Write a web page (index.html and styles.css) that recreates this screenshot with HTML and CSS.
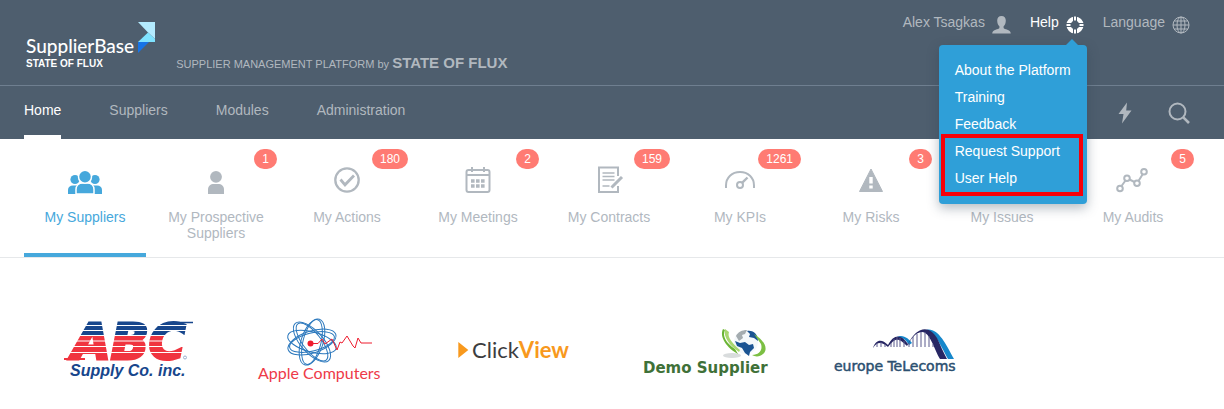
FILE: index.html
```html
<!DOCTYPE html>
<html lang="en">
<head>
  <meta charset="UTF-8" />
  <meta name="viewport" content="width=device-width, initial-scale=1.0" />
  <title>SupplierBase</title>
  <link rel="stylesheet" href="styles.css">
</head>
<body>
  <header class="header">
    <div class="topbar">
      <a class="brand" href="#">
        <span class="brand-text">
          <span class="brand-name">SupplierBase</span>
          <span class="brand-sub">STATE OF FLUX</span>
        </span>
        <svg class="brand-mark" width="18" height="31" viewBox="0 0 18 31" aria-hidden="true">
          <path d="M0 0H17V17L10 10.500Z" fill="#b3ebff"/>
          <path d="M10 10.500L17 17V20H0Z" fill="#7fe3ff"/>
          <path d="M0 20H11L0 31Z" fill="#1673e6"/>
        </svg>
      </a>
      <p class="tagline">SUPPLIER MANAGEMENT PLATFORM <span>by</span> <strong>STATE OF FLUX</strong></p>

      <ul class="user-menu">
        <li>
          <a href="#">Alex Tsagkas
            <svg width="19" height="18" viewBox="0 0 19 18" aria-hidden="true"><path fill="currentColor" d="M9.500 0C6.700 0 5.200 1.800 5.200 4.500C5.200 7 6 9.200 7.400 10.300V12C6.800 13.600 0.500 13.300 0.200 17.500H18.800C18.500 13.300 12.200 13.600 11.600 12V10.300C13 9.200 13.800 7 13.800 4.500C13.800 1.800 12.300 0 9.500 0Z"/></svg>
          </a>
        </li>
        <li class="open">
          <a href="#">Help
            <svg width="18" height="18" viewBox="0 0 18 18" aria-hidden="true">
              <circle cx="9" cy="9" r="6.500" fill="none" stroke="currentColor" stroke-width="4.200"/>
              <path d="M9 0V6M9 12V18M0 9H6M12 9H18" stroke="#4e5e6e" stroke-width="4"/>
              <path d="M9 0.500V4.500M9 13.500V17.500M0.500 9H4.500M13.500 9H17.500" stroke="currentColor" stroke-width="2"/>
            </svg>
          </a>
          <div class="dropdown">
            <a href="#">About the Platform</a>
            <a href="#">Training</a>
            <a href="#">Feedback</a>
            <div class="dropdown-marked">
              <a href="#">Request Support</a>
              <a href="#">User Help</a>
            </div>
          </div>
        </li>
        <li>
          <a href="#">Language
            <svg width="18" height="18" viewBox="0 0 18 18" fill="none" stroke="currentColor" aria-hidden="true">
              <circle cx="9" cy="9" r="8"/>
              <ellipse cx="9" cy="9" rx="4" ry="8"/>
              <path d="M9 1V17M1 9H17M2.200 5H15.800M2.200 13H15.800"/>
            </svg>
          </a>
        </li>
      </ul>
    </div>

    <nav class="nav">
      <a class="active" href="#">Home</a>
      <a href="#">Suppliers</a>
      <a href="#">Modules</a>
      <a href="#">Administration</a>
      <div class="nav-tools">
        <button type="button" aria-label="Quick actions">
          <svg width="22" height="22" viewBox="0 0 22 22" aria-hidden="true"><path fill="currentColor" d="M13 0.500L4.500 12H9.500L8 21.500L17.500 8.500H12.200Z"/></svg>
        </button>
        <button type="button" aria-label="Search">
          <svg width="22" height="22" viewBox="0 0 22 22" fill="none" stroke="currentColor" stroke-width="2" aria-hidden="true"><circle cx="9.500" cy="9.500" r="8"/><path d="M15.300 15.300L21 21" stroke-width="2.600"/></svg>
        </button>
      </div>
    </nav>
  </header>

  <main>
    <div class="tabs">
      <a class="tab active" href="#">
        <svg class="tab-icon" viewBox="0 0 36 32" fill="currentColor" aria-hidden="true">
          <circle cx="8" cy="15.500" r="4.600"/><circle cx="28" cy="15.500" r="4.600"/>
          <path d="M1 30V26C1 23 3 21.500 6 21.500H30C33 21.500 35 23 35 26V30Z"/>
          <path d="M9 30V25.500C9 21.500 12 19 16 19H20C24 19 27 21.500 27 25.500V30Z" stroke="#fff" stroke-width="1.500"/>
          <circle cx="18" cy="12.700" r="6.500" stroke="#fff" stroke-width="1.500"/>
          <path d="M0 30.200H36V32H0Z" fill="#fff"/>
        </svg>
        My Suppliers
      </a>
      <a class="tab" href="#">
        <svg class="tab-icon" viewBox="0 0 36 32" fill="currentColor" aria-hidden="true">
          <circle cx="18" cy="12.800" r="5.900"/>
          <path d="M10 30V25.500C10 22 12.500 20 16 20H20C23.500 20 26 22 26 25.500V30Z"/>
        </svg>
        My Prospective Suppliers
        <span class="badge">1</span>
      </a>
      <a class="tab" href="#">
        <svg class="tab-icon" viewBox="0 0 36 32" fill="none" stroke="currentColor" stroke-width="2.300" aria-hidden="true">
          <circle cx="18" cy="16" r="11.700"/>
          <path d="M11.500 15.500L16 20.800L25 11.500" stroke-width="2.800"/>
        </svg>
        My Actions
        <span class="badge">180</span>
      </a>
      <a class="tab" href="#">
        <svg class="tab-icon" viewBox="0 0 36 32" fill="none" stroke="currentColor" stroke-width="2" aria-hidden="true">
          <rect x="6.500" y="6" width="23" height="22" rx="2"/>
          <path d="M6.500 11H29.500M12 3V8M24 3V8"/>
          <path d="M11 17H25M11 22H25" stroke-width="3.600" stroke-dasharray="3.600 1.400"/>
        </svg>
        My Meetings
        <span class="badge">2</span>
      </a>
      <a class="tab" href="#">
        <svg class="tab-icon" viewBox="0 0 36 32" fill="none" stroke="currentColor" stroke-width="2" aria-hidden="true">
          <path d="M27 12V3.500H8V28H27V22"/>
          <path d="M11.500 9H23.500M11.500 12.500H23.500M11.500 16H23.500M11.500 22H18.500" stroke-width="1.700"/>
          <path d="M31 13L22.500 21.500L20.500 23.500" stroke-width="3"/>
        </svg>
        My Contracts
        <span class="badge">159</span>
      </a>
      <a class="tab" href="#">
        <svg class="tab-icon" viewBox="0 0 36 32" fill="none" stroke="currentColor" stroke-width="2" aria-hidden="true">
          <path d="M4 24V21.500C4 13.500 10 8 18 8S32 13.500 32 21.500V24"/>
          <circle cx="18" cy="21" r="3"/>
          <path d="M20.300 18.700L25.500 13.500" stroke-width="2.400"/>
        </svg>
        My KPIs
        <span class="badge">1261</span>
      </a>
      <a class="tab" href="#">
        <svg class="tab-icon" viewBox="0 0 36 32" fill="currentColor" aria-hidden="true">
          <path d="M18 5L29.500 27.500H6.500Z" stroke="currentColor" stroke-linejoin="round"/>
          <path d="M16.300 13H19.700V19.500H16.300ZM16.300 21.500H19.700V24.500H16.300Z" fill="#fff"/>
        </svg>
        My Risks
        <span class="badge">3</span>
      </a>
      <a class="tab" href="#">
        <svg class="tab-icon" viewBox="0 0 36 32" fill="none" stroke="currentColor" stroke-width="2" aria-hidden="true">
          <circle cx="18" cy="16" r="11"/>
          <path d="M18 10V18M18 20V22"/>
        </svg>
        My Issues
      </a>
      <a class="tab" href="#">
        <svg class="tab-icon" viewBox="0 0 36 32" fill="none" stroke="currentColor" stroke-width="2" aria-hidden="true">
          <path d="M6.500 22L10.500 16.500M14.500 15.500L19.500 18M23.500 17L27.500 10.500"/>
          <circle cx="5" cy="24.500" r="2.800"/><circle cx="12" cy="14.300" r="2.800"/>
          <circle cx="22" cy="19.300" r="2.800"/><circle cx="29" cy="7.800" r="2.800"/>
        </svg>
        My Audits
        <span class="badge">5</span>
      </a>
    </div>

    <div class="suppliers">
      <a href="#">
        <svg viewBox="0 0 160 80">
          <defs>
            <pattern id="stripes" width="160" height="80" patternUnits="userSpaceOnUse">
              <path d="M0 0H160V26H0Z" fill="#17468c"/>
              <path d="M0 26H160V80H0Z" fill="#f0343f"/>
              <path d="M0 15.500H160M0 20.500H160M0 25.500H160M0 31H160M0 36.500H160M0 42.500H160" stroke="#fff" stroke-width="1"/>
            </pattern>
          </defs>
          <path d="M124 12.500H144" stroke="#17468c" stroke-width="1.500"/>
          <path d="M15 49H36" stroke="#f0343f" stroke-width="2"/>
          <text class="logo-abc" x="23" y="49" fill="url(#stripes)" stroke="url(#stripes)">ABC</text>
          <text class="logo-abc-sub" x="21" y="66">Supply Co. inc.</text>
          <circle cx="136" cy="47.500" r="1.500" fill="none" stroke="#9ab0cf"/>
        </svg>
      </a>
      <a href="#">
        <svg viewBox="0 0 160 80">
          <g fill="none" stroke="#2b78bd" stroke-width="1">
            <ellipse cx="71" cy="32" rx="25" ry="11" transform="rotate(-18 71 32)"/>
            <ellipse cx="71" cy="32" rx="23" ry="9" transform="rotate(-14 71 32)"/>
            <ellipse cx="71" cy="32" rx="25" ry="11" transform="rotate(48 71 32)"/>
            <ellipse cx="71" cy="32" rx="23" ry="9" transform="rotate(52 71 32)"/>
            <ellipse cx="71" cy="32" rx="24" ry="11" transform="rotate(108 71 32)"/>
            <ellipse cx="71" cy="32" rx="23" ry="9" transform="rotate(104 71 32)"/>
            <ellipse cx="71" cy="32" rx="25" ry="10" transform="rotate(15 71 32)"/>
          </g>
          <circle cx="69.500" cy="33.500" r="3" fill="#ee1c2e"/>
          <path d="M72 33.500H77L81 29L84 34L91 29L96 40L99 32L101 33L106 26L112 36L114 38L117 28L120 33H131" fill="none" stroke="#ee1c2e" stroke-width="1"/>
          <text class="logo-apple" x="17" y="69">Apple Computers</text>
        </svg>
      </a>
      <a href="#">
        <svg viewBox="0 0 160 80">
          <path d="M25.300 32L35.300 40L25.300 48Z" fill="#f8991d"/>
          <text class="logo-click" x="39" y="48">Click<tspan class="logo-view">View</tspan></text>
        </svg>
      </a>
      <a href="#">
        <svg viewBox="0 0 160 80">
          <ellipse cx="107" cy="45.500" rx="9" ry="2.500" fill="#d9dcdd"/>
          <circle cx="121" cy="32" r="12" fill="#f4f8fb"/>
          <path d="M111 26C113 22 117 20 122 20L120 24L117 25L118 28L114 31Z" fill="#a4acb0"/>
          <path d="M122 21C129 20 133 25 133 31L129 28L124 27L125 24Z" fill="#1b5493"/>
          <path d="M110 31L115 33L120 32L124 35L128 34L129 38L125 42L124 46L120 43L117 38L112 36Z" fill="#1b5493"/>
          <path d="M98 19C94 27 102 38 113 44L110 39C101 33 97 26 100 20Z" fill="#6bb536"/>
          <path d="M100 19C98 27 105 36 114 42L115 40C107 33 102 27 104 22Z" fill="#a8d66f"/>
          <path d="M129 24C139 30 144 39 138 44C135 47 130 47 127 45C134 45 138 40 136 34Z" fill="#7cbf43"/>
          <text class="logo-demo" x="18" y="63">Demo Supplier</text>
        </svg>
      </a>
      <a href="#">
        <svg viewBox="0 0 160 80">
          <path d="M108 20C120 16 128 32 137 49H131C123 34 117 20 108 20Z" fill="#1687cb"/>
          <path d="M79 28C85 23 92 29 95 33L92 35C88 28 84 27 79 28Z" fill="#1687cb"/>
          <path d="M56 38C59 29 65 29 71 35C77 24 84 24 91 34C99 17 112 14 120 28C123 34 126 42 130 49H123C117 39 113 22 105 22C98 22 93 31 90 36C81 27 78 28 71 37C64 31 60 32 56 38Z" fill="#272663"/>
          <path d="M60 33V37M64 32V37M68 34V37M74 33V37M77 29V37M80 27V37M83 28V37M87 31V37M92 33V37M96 27V37M100 24V37M104 22V37M108 22V37M112 26V37M116 34V37" stroke="#5b5a8d" stroke-width="1"/>
          <text class="logo-europe" x="17" y="61">europe TeLecoms</text>
        </svg>
      </a>
    </div>
  </main>
</body>
</html>
```
FILE: styles.css
```css
*, *::before, *::after {
  margin: 0;
  padding: 0;
  box-sizing: border-box;
}
body {
  font-family: "Liberation Sans", Arial, sans-serif;
  font-size: 14px;
  line-height: 16px;
  color: #b1b8bf;
  background: #fff;
}
a {
  color: inherit;
  text-decoration: none;
}
svg {
  display: block;
}

/* Header */
.header {
  background: #4e5e6e;
}
.topbar {
  display: flex;
  align-items: flex-end;
  min-height: 86px;
  padding: 0 34px 13px 26px;
  border-bottom: 1px solid #6f7f90;
}
.brand {
  display: flex;
  gap: 4px;
  align-self: flex-start;
  padding-top: 22px;
  color: #fff;
}
.brand-text {
  display: flex;
  flex-direction: column;
  padding-top: 12px;
}
.brand-name {
  font: 500 19px/24px Lato, sans-serif;
}
.brand-sub {
  font-size: 10px;
  font-weight: bold;
  line-height: 11px;
}
.tagline {
  margin-left: 20px;
  font-size: 11px;
}
.tagline strong {
  font-size: 15px;
}
.user-menu {
  display: flex;
  gap: 19px;
  align-self: flex-start;
  margin-left: auto;
  padding-top: 14px;
  list-style: none;
}
.user-menu li {
  position: relative;
}
.user-menu li > a {
  display: flex;
  gap: 7px;
}
.user-menu svg {
  margin-top: 2px;
}
.user-menu .open > a {
  color: #fff;
}

/* Help menu */
.dropdown {
  position: absolute;
  z-index: 10;
  top: 31px;
  right: -3px;
  width: 148px;
  padding: 12px 0;
  color: #fff;
  line-height: 27px;
  background: #2f9fd8;
  border-radius: 4px;
  box-shadow: 0 4px 12px rgba(40, 60, 80, 0.35);
}
.dropdown::before {
  content: "";
  position: absolute;
  top: -6px;
  right: 9px;
  border: 6px solid transparent;
  border-top: 0;
  border-bottom-color: #2f9fd8;
}
.dropdown a {
  display: block;
  padding-left: 16px;
  white-space: nowrap;
}
.dropdown-marked {
  margin: 0 8px 0 6px;
  outline: 4px solid #f60009;
}
.dropdown-marked a {
  padding-left: 10px;
}

/* Main navigation */
.nav {
  display: flex;
  gap: 48px;
  padding: 0 34px 0 24px;
}
.nav > a {
  padding: 16px 0 17px;
  border-bottom: 4px solid transparent;
}
.nav > .active {
  color: #fff;
  border-color: #fff;
}
.nav-tools {
  display: flex;
  gap: 32px;
  align-items: center;
  margin-left: auto;
}
.nav-tools button {
  color: inherit;
  background: none;
  border: 0;
}

/* Tabs */
.tabs {
  display: grid;
  grid-template-columns: repeat(9, 1fr);
  gap: 9px;
  padding: 0 30px 0 24px;
  border-bottom: 1px solid #e6e8ea;
}
.tab {
  position: relative;
  padding: 25px 12px 12px;
  text-align: center;
  border-bottom: 4px solid transparent;
}
.tab.active {
  color: #46a8dc;
  border-color: #46a8dc;
}
.tab-icon {
  width: 36px;
  height: 32px;
  margin: 0 auto 13px;
}
.badge {
  position: absolute;
  top: 10px;
  right: 0;
  padding: 0 8px;
  color: #fff;
  font-size: 12px;
  line-height: 20px;
  background: #ff7b73;
  border-radius: 10px;
}

/* Supplier logos */
.suppliers {
  display: grid;
  grid-template-columns: repeat(6, 1fr);
  justify-items: center;
  padding: 52px 39px 0 33px;
}
.suppliers svg {
  width: 160px;
  height: 80px;
}
.logo-abc {
  font: italic bold 50px "DejaVu Sans", sans-serif;
  stroke-width: 3px;
}
.logo-abc-sub {
  font: italic bold 16px "Liberation Sans", sans-serif;
  fill: #17468c;
}
.logo-apple {
  font: 16px Lato, sans-serif;
  fill: #ee3a48;
}
.logo-click {
  font: 22px Lato, sans-serif;
  fill: #3c3d40;
}
.logo-view {
  font-weight: bold;
  fill: #f8991d;
}
.logo-demo {
  font: bold 15px "DejaVu Sans", sans-serif;
  fill: #3f7138;
}
.logo-europe {
  font: 14px "DejaVu Sans", sans-serif;
  fill: #2b4f70;
  stroke: #2b4f70;
  stroke-width: 0.5px;
}
```
